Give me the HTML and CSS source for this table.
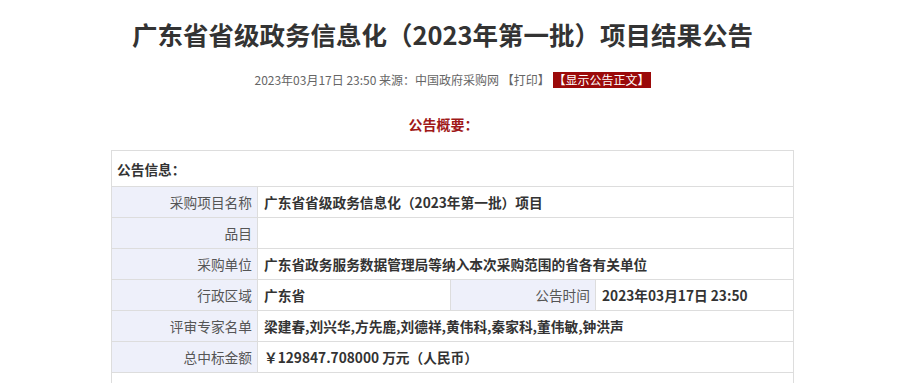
FILE: index.html
```html
<!DOCTYPE html>
<html lang="zh-CN">
<head>
<meta charset="utf-8">
<title>广东省省级政务信息化（2023年第一批）项目结果公告</title>
<link rel="stylesheet" href="styles.css">
</head>
<body>
<div class="page">
  <h1 class="title">广东省省级政务信息化（2023年第一批）项目结果公告</h1>
  <div class="meta">2023年03月17日 23:50 来源：中国政府采购网 【打印】 <span class="show">【显示公告正文】</span></div>
  <div class="summary">公告概要：</div>
  <table class="info">
    <tr><td class="head" colspan="4">公告信息：</td></tr>
    <tr><td class="lab">采购项目名称</td><td class="val" colspan="3">广东省省级政务信息化（2023年第一批）项目</td></tr>
    <tr><td class="lab">品目</td><td class="val" colspan="3"></td></tr>
    <tr><td class="lab">采购单位</td><td class="val" colspan="3">广东省政务服务数据管理局等纳入本次采购范围的省各有关单位</td></tr>
    <tr><td class="lab">行政区域</td><td class="val half">广东省</td><td class="lab lab2">公告时间</td><td class="val">2023年03月17日 23:50</td></tr>
    <tr><td class="lab">评审专家名单</td><td class="val" colspan="3">梁建春,刘兴华,方先鹿,刘德祥,黄伟科,秦家科,董伟敏,钟洪声</td></tr>
    <tr><td class="lab">总中标金额</td><td class="val" colspan="3">￥129847.708000 万元（人民币）</td></tr>
    <tr><td class="blank" colspan="4"></td></tr>
  </table>
</div>
</body>
</html>
```

FILE: styles.css
```css
html, body {
  margin: 0;
  padding: 0;
  background: #fff;
}
body {
  font-family: "Noto Sans CJK SC", "Microsoft YaHei", sans-serif;
  color: #333;
}
.page {
  width: 683px;
  margin-left: 111px;
}
.title {
  margin: 0;
  padding-top: 16px;
  font-size: 25.5px;
  line-height: 36px;
  font-weight: bold;
  color: #333;
  text-align: center;
  margin-left: -20px;
}
.meta {
  margin-top: 20px;
  font-size: 12px;
  line-height: 16px;
  color: #666;
  text-align: center;
}
.show {
  background: #9b0a0a;
  color: #fff;
  padding: 0 1px;
  display: inline-block;
}
.summary {
  margin-top: 27px;
  font-size: 14px;
  line-height: 18px;
  font-weight: bold;
  color: #a01818;
  text-align: center;
  margin-left: -18px;
}
.info {
  margin-top: 17px;
  width: 683px;
  border-collapse: collapse;
  border: 1px solid #ddd;
  font-size: 13.7px;
}
.info td {
  border: 1px solid #ddd;
  padding: 0 6px;
  height: 30px;
}
.info .head {
  height: 35px;
  font-weight: bold;
  color: #333;
  padding-left: 5px;
}
.info .lab {
  width: 134px;
  background: #eef0fa;
  color: #555;
  text-align: right;
  padding-right: 5px;
}
.info .lab2 {
  width: 133px;
}
.info .val {
  font-weight: bold;
  color: #333;
}
.info .half {
  width: 180px;
}
.info .blank {
  height: 30px;
}
```
